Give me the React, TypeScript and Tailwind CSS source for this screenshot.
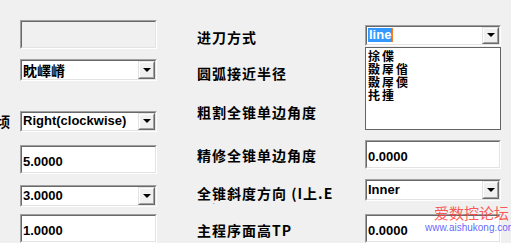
import React from 'react';

const cn = '"Noto Sans CJK SC", "Noto Sans", sans-serif';
const latin = '"Liberation Sans", Arial, sans-serif';

function Sunken({ className, children, gray }: { className: string; children?: React.ReactNode; gray?: boolean }) {
  return (
    <div className={`border border-t-[#a0a0a0] border-l-[#a0a0a0] border-b-white border-r-white ${className}`}>
      <div
        className={`h-full w-full border border-t-[#696969] border-l-[#696969] border-b-[#e3e3e3] border-r-[#e3e3e3] ${gray ? 'bg-[#f0f0f0]' : 'bg-white'}`}
      >
        {children}
      </div>
    </div>
  );
}

function ArrowBtn() {
  return (
    <div className="h-full w-[17px] shrink-0 border border-t-[#e3e3e3] border-l-[#e3e3e3] border-b-[#696969] border-r-[#696969]">
      <div className="h-full w-full bg-[#f0f0f0] border border-t-white border-l-white border-b-[#a0a0a0] border-r-[#a0a0a0] flex items-center justify-center">
        <div className="w-0 h-0 border-l-[4px] border-r-[4px] border-t-[4px] border-l-transparent border-r-transparent border-t-black" />
      </div>
    </div>
  );
}

function Combo({ className, children }: { className: string; children?: React.ReactNode }) {
  return (
    <Sunken className={className}>
      <div className="flex h-full w-full">
        <div className="flex-1 flex items-center pl-[1px] overflow-hidden whitespace-nowrap">{children}</div>
        <ArrowBtn />
      </div>
    </Sunken>
  );
}

function Val({ children }: { children: React.ReactNode }) {
  return (
    <span className="text-[13px] font-bold text-black leading-[16px]" style={{ fontFamily: latin }}>
      {children}
    </span>
  );
}

function Label({ className, children }: { className: string; children: React.ReactNode }) {
  return (
    <div
      className={`text-[14px] font-bold leading-[16px] tracking-[1px] text-black whitespace-nowrap ${className}`}
      style={{ fontFamily: cn }}
    >
      {children}
    </div>
  );
}

export default function App() {
  return (
    <div className="relative w-[511px] h-[243px] overflow-hidden bg-[#f0f0f0] flex">
      {/* left cut-off labels */}
      <div className="w-[20px] shrink-0 flex flex-col pt-[113px]">
        <div className="-ml-[4px] text-[14px] font-bold leading-[16px] text-black" style={{ fontFamily: cn }}>
          顷
        </div>
      </div>

      {/* left inputs */}
      <div className="w-[137px] shrink-0 flex flex-col pt-[20px]">
        <Sunken gray className="h-[30px]" />
        <Combo className="h-[22px] mt-[10px]">
          <span className="text-[14px] font-bold leading-[16px] text-black" style={{ fontFamily: cn }}>眈嶧嵴</span>
        </Combo>
        <Combo className="h-[22px] mt-[30px]">
          <Val>Right(clockwise)</Val>
        </Combo>
        <Sunken className="h-[30px] mt-[13px]">
          <div className="pl-[1px] pt-[1px]"><Val>5.0000</Val></div>
        </Sunken>
        <Combo className="h-[22px] mt-[11px]">
          <Val>3.0000</Val>
        </Combo>
        <Sunken className="h-[30px] mt-[7px]">
          <div className="pl-[1px] pt-[1px]"><Val>1.0000</Val></div>
        </Sunken>
      </div>

      {/* middle labels */}
      <div className="ml-[40px] w-[168px] shrink-0 flex flex-col pt-[29px]">
        <Label className="h-[16px]">进刀方式</Label>
        <Label className="h-[16px] mt-[20px]">圆弧接近半径</Label>
        <Label className="h-[16px] mt-[23px]">粗割全锥单边角度</Label>
        <Label className="h-[16px] mt-[27px]">精修全锥单边角度</Label>
        <Label className="h-[19px] mt-[22px] overflow-hidden">
          全锥斜度方向 (I上.E
          <br />
          下)
        </Label>
        <Label className="h-[16px] mt-[18px]">主程序面高TP</Label>
      </div>

      {/* right inputs */}
      <div className="w-[136px] shrink-0 flex flex-col pt-[25px]">
        <Combo className="h-[21px]">
          <span
            className="bg-[#3399ff] text-white text-[13px] font-bold leading-[14px] px-[1px] border-r border-r-[#ff7a1a]"
            style={{ fontFamily: latin }}
          >
            line
          </span>
        </Combo>
        <div
          className="h-[85px] mt-[1px] bg-white border border-[#646464] pl-[2px] pt-[1px] text-[12px] font-bold leading-[13px] tracking-[2px] text-black"
          style={{ fontFamily: cn }}
        >
          <div>捈偞</div>
          <div>敠屖偗</div>
          <div>敠屖偄</div>
          <div>扥揰</div>
        </div>
        <Sunken className="h-[30px] mt-[10px]">
          <div className="pl-[1px] pt-[1px]"><Val>0.0000</Val></div>
        </Sunken>
        <Combo className="h-[22px] mt-[10px]">
          <Val>Inner</Val>
        </Combo>
        <Sunken className="h-[30px] mt-[13px]">
          <div className="pl-[1px] pt-[1px]"><Val>0.0000</Val></div>
        </Sunken>
      </div>

      {/* watermark */}
      <div className="absolute left-[427px] top-[204px] flex flex-col items-center pointer-events-none">
        <div className="text-[15px] leading-[18px] text-[#ff3b3b]/85" style={{ fontFamily: cn }}>
          爱数控论坛
        </div>
        <div className="text-[10px] leading-[11px] text-[#3a3aff]/80 -ml-[2px]" style={{ fontFamily: latin }}>
          www.aishukong.com
        </div>
      </div>
    </div>
  );
}
